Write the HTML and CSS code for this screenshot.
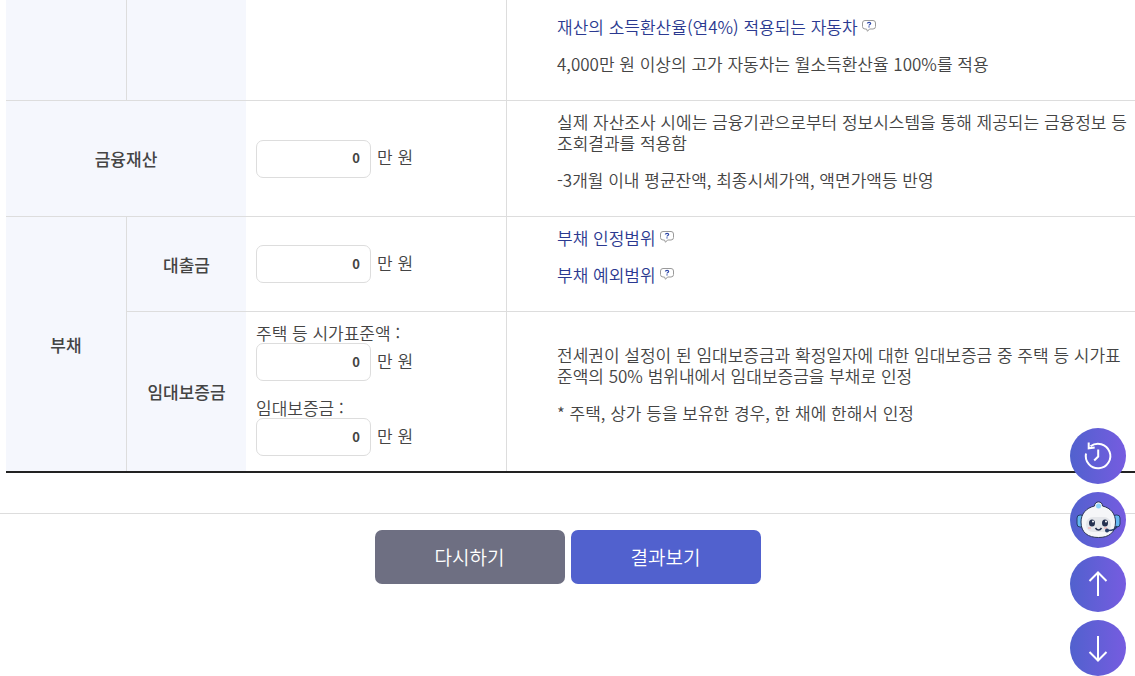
FILE: index.html
```html
<!DOCTYPE html>
<html lang="ko">

<head>
    <meta charset="UTF-8">
    <meta name="viewport" content="width=device-width, initial-scale=1.0">
    <title>모의계산</title>
    <link rel="stylesheet" href="styles.css">
</head>

<body>
    <!-- Speech bubble used by the help links -->
    <svg class="sprite" aria-hidden="true">
        <symbol id="help" viewBox="0 0 14 12">
            <path d="M3 .5h8a2.500 2.500 0 0 1 2.500 2.500v3.500a2.500 2.500 0 0 1-2.500 2.500H7.500L5.500 11.300 4.500 9H3A2.500 2.500 0 0 1 .5 6.500V3A2.500 2.500 0 0 1 3 .5z" fill="#fff" stroke="#9a9a9a" />
            <path d="M5.300 3.500c.2-1.500 3.400-1.500 3.400 0 0 1-1.700.9-1.700 2M7 6.300v1.200" fill="none" stroke="#2c46a8" stroke-width="1.100" />
        </symbol>
    </svg>

    <main>
        <div class="table-wrap">
            <table class="calc-table">
                <colgroup>
                    <col class="col-group">
                    <col class="col-item">
                    <col class="col-input">
                    <col>
                </colgroup>
                <tbody>
                    <tr>
                        <th class="line"></th>
                        <th></th>
                        <td class="line"></td>
                        <td class="desc desc-first">
                            <p><a href="#">재산의 소득환산율(연4%) 적용되는 자동차<svg class="help-icon"><use href="#help" /></svg></a></p>
                            <p>4,000만 원 이상의 고가 자동차는 월소득환산율 100%를 적용</p>
                        </td>
                    </tr>
                    <tr>
                        <th colspan="2" scope="row"><label for="finance">금융재산</label></th>
                        <td class="line">
                            <div class="amount"><input type="text" id="finance" value="0"><span>만 원</span></div>
                        </td>
                        <td class="desc">
                            <p>실제 자산조사 시에는 금융기관으로부터 정보시스템을 통해 제공되는 금융정보 등 조회결과를 적용함</p>
                            <p>-3개월 이내 평균잔액, 최종시세가액, 액면가액등 반영</p>
                        </td>
                    </tr>
                    <tr>
                        <th rowspan="2" scope="rowgroup" class="line">부채</th>
                        <th scope="row"><label for="loan">대출금</label></th>
                        <td class="line">
                            <div class="amount"><input type="text" id="loan" value="0"><span>만 원</span></div>
                        </td>
                        <td class="desc">
                            <p><a href="#">부채 인정범위<svg class="help-icon"><use href="#help" /></svg></a></p>
                            <p><a href="#">부채 예외범위<svg class="help-icon"><use href="#help" /></svg></a></p>
                        </td>
                    </tr>
                    <tr>
                        <th scope="row">임대보증금</th>
                        <td class="line fields">
                            <div class="field">
                                <label for="price">주택 등 시가표준액 :</label>
                                <div class="amount"><input type="text" id="price" value="0"><span>만 원</span></div>
                            </div>
                            <div class="field">
                                <label for="deposit">임대보증금 :</label>
                                <div class="amount"><input type="text" id="deposit" value="0"><span>만 원</span></div>
                            </div>
                        </td>
                        <td class="desc">
                            <p>전세권이 설정이 된 임대보증금과 확정일자에 대한 임대보증금 중 주택 등 시가표준액의 50% 범위내에서 임대보증금을 부채로 인정</p>
                            <p>* 주택, 상가 등을 보유한 경우, 한 채에 한해서 인정</p>
                        </td>
                    </tr>
                </tbody>
            </table>
        </div>

        <div class="actions">
            <button type="button" class="btn btn-reset">다시하기</button>
            <button type="button" class="btn btn-result">결과보기</button>
        </div>
    </main>

    <!-- Quick menu -->
    <nav class="quick">
        <button type="button" aria-label="최근 이용">
            <svg viewBox="0 0 56 56" fill="none" stroke="#fff" stroke-width="2">
                <path d="M16 25.500A12.300 12.300 0 1 0 20.500 18.300" />
                <path d="M18.700 14.500v5.800l6-.8" />
                <path d="M28.200 21.500v7l-4 4" />
            </svg>
        </button>
        <button type="button" aria-label="챗봇">
            <svg viewBox="0 0 56 56">
                <rect x="7" y="23" width="7" height="12" rx="3" fill="#65b8f2" stroke="#243c66" />
                <rect x="43" y="23" width="7" height="12" rx="3" fill="#65b8f2" stroke="#243c66" />
                <path d="M24.500 14c0-5.500 8-5.500 8 0C41 16 45.500 22 45.500 30c0 11-7 15.500-17 15.500S11 41 11 30c0-8 5-14 13.500-16z" fill="#f5f6f8" stroke="#2b3557" />
                <rect x="16" y="25" width="25" height="15" rx="7" fill="#e4e6ea" />
                <circle cx="28.500" cy="14" r="2.500" fill="#8ed4fb" />
                <ellipse cx="22" cy="31" rx="3" ry="3.500" fill="#253150" />
                <ellipse cx="35" cy="31" rx="3" ry="3.500" fill="#253150" />
                <circle cx="23" cy="29.500" r="1" fill="#fff" />
                <circle cx="36" cy="29.500" r="1" fill="#fff" />
                <path d="M18 36h3M34 36h3" stroke="#f3b9b9" stroke-width="1.500" />
                <path d="M25.500 36c1.500 2.500 4.500 2.500 6 0" fill="none" stroke="#253150" stroke-width="1.500" />
                <path d="M47 34c-1 3-4 4.500-9 4.500" fill="none" stroke="#243c66" stroke-width="1.500" />
                <circle cx="37" cy="38.500" r="2" fill="#243c66" />
            </svg>
        </button>
        <button type="button" aria-label="맨 위로">
            <svg viewBox="0 0 56 56" fill="none" stroke="#fff" stroke-width="2">
                <path d="M28 40V17M19.500 25 28 16.500 36.500 25" />
            </svg>
        </button>
        <button type="button" aria-label="맨 아래로">
            <svg viewBox="0 0 56 56" fill="none" stroke="#fff" stroke-width="2">
                <path d="M28 16v23M19.500 32 28 40.500 36.500 32" />
            </svg>
        </button>
    </nav>
</body>

</html>
```
FILE: styles.css
```css
* {
    box-sizing: border-box;
}

body {
    margin: 0;
    font-family: "Noto Sans CJK KR", sans-serif;
    font-size: 17px;
    font-weight: 350;
    line-height: 21px;
    color: #444;
    background: #fff;
}

.sprite {
    display: none;
}

.table-wrap {
    padding-left: 6px;
}

.calc-table {
    width: 100%;
    table-layout: fixed;
    border-collapse: separate;
    border-spacing: 0;
    border-bottom: 2px solid #222;
}

.col-group {
    width: 121px;
}

.col-item {
    width: 119px;
}

.col-input {
    width: 261px;
}

th,
td {
    padding: 10px;
    border-bottom: 1px solid #ddd;
    vertical-align: middle;
}

th {
    font-weight: 500;
    background: #f5f7fd;
}

.line {
    border-right: 1px solid #ddd;
}

tr:last-child th,
tr:last-child td,
th[rowspan] {
    border-bottom: 0;
}

.desc {
    padding: 10px 8px 10px 50px;
    word-break: break-all;
}

.desc-first {
    padding-top: 16px;
}

.desc p {
    margin: 0 0 16px;
}

.desc a {
    color: #2b3990;
    text-decoration: none;
}

.help-icon {
    width: 14px;
    height: 12px;
    margin-left: 4px;
    vertical-align: 2px;
}

.fields {
    padding-bottom: 15px;
}

.field + .field {
    margin-top: 16px;
}

.field label {
    display: block;
}

.amount {
    display: flex;
    align-items: center;
    gap: 6px;
}

.amount span {
    padding-bottom: 4px;
}

.amount input {
    width: 115px;
    height: 38px;
    padding: 0 10px 2px;
    border: 1px solid #ddd;
    border-radius: 7px;
    font-family: inherit;
    font-size: 13px;
    font-weight: 700;
    color: #444;
    text-align: right;
}

.actions {
    display: flex;
    justify-content: center;
    gap: 6px;
    margin-top: 40px;
    padding: 16px 0;
    border-top: 1px solid #ddd;
}

.btn {
    width: 190px;
    height: 54px;
    padding: 0 0 2px;
    border: 0;
    border-radius: 7px;
    font-family: inherit;
    font-size: 19px;
    font-weight: 350;
    color: #fff;
    cursor: pointer;
}

.btn-reset {
    background: #6e6f82;
}

.btn-result {
    background: #5161ce;
}

.quick {
    position: fixed;
    right: 9px;
    bottom: 0;
    display: flex;
    flex-direction: column;
    gap: 8px;
}

.quick button {
    width: 56px;
    height: 56px;
    padding: 0;
    border: 0;
    border-radius: 50%;
    background: linear-gradient(90deg, #5161ce, #765ce0);
    cursor: pointer;
}

.quick svg {
    display: block;
    width: 56px;
    height: 56px;
}
```
